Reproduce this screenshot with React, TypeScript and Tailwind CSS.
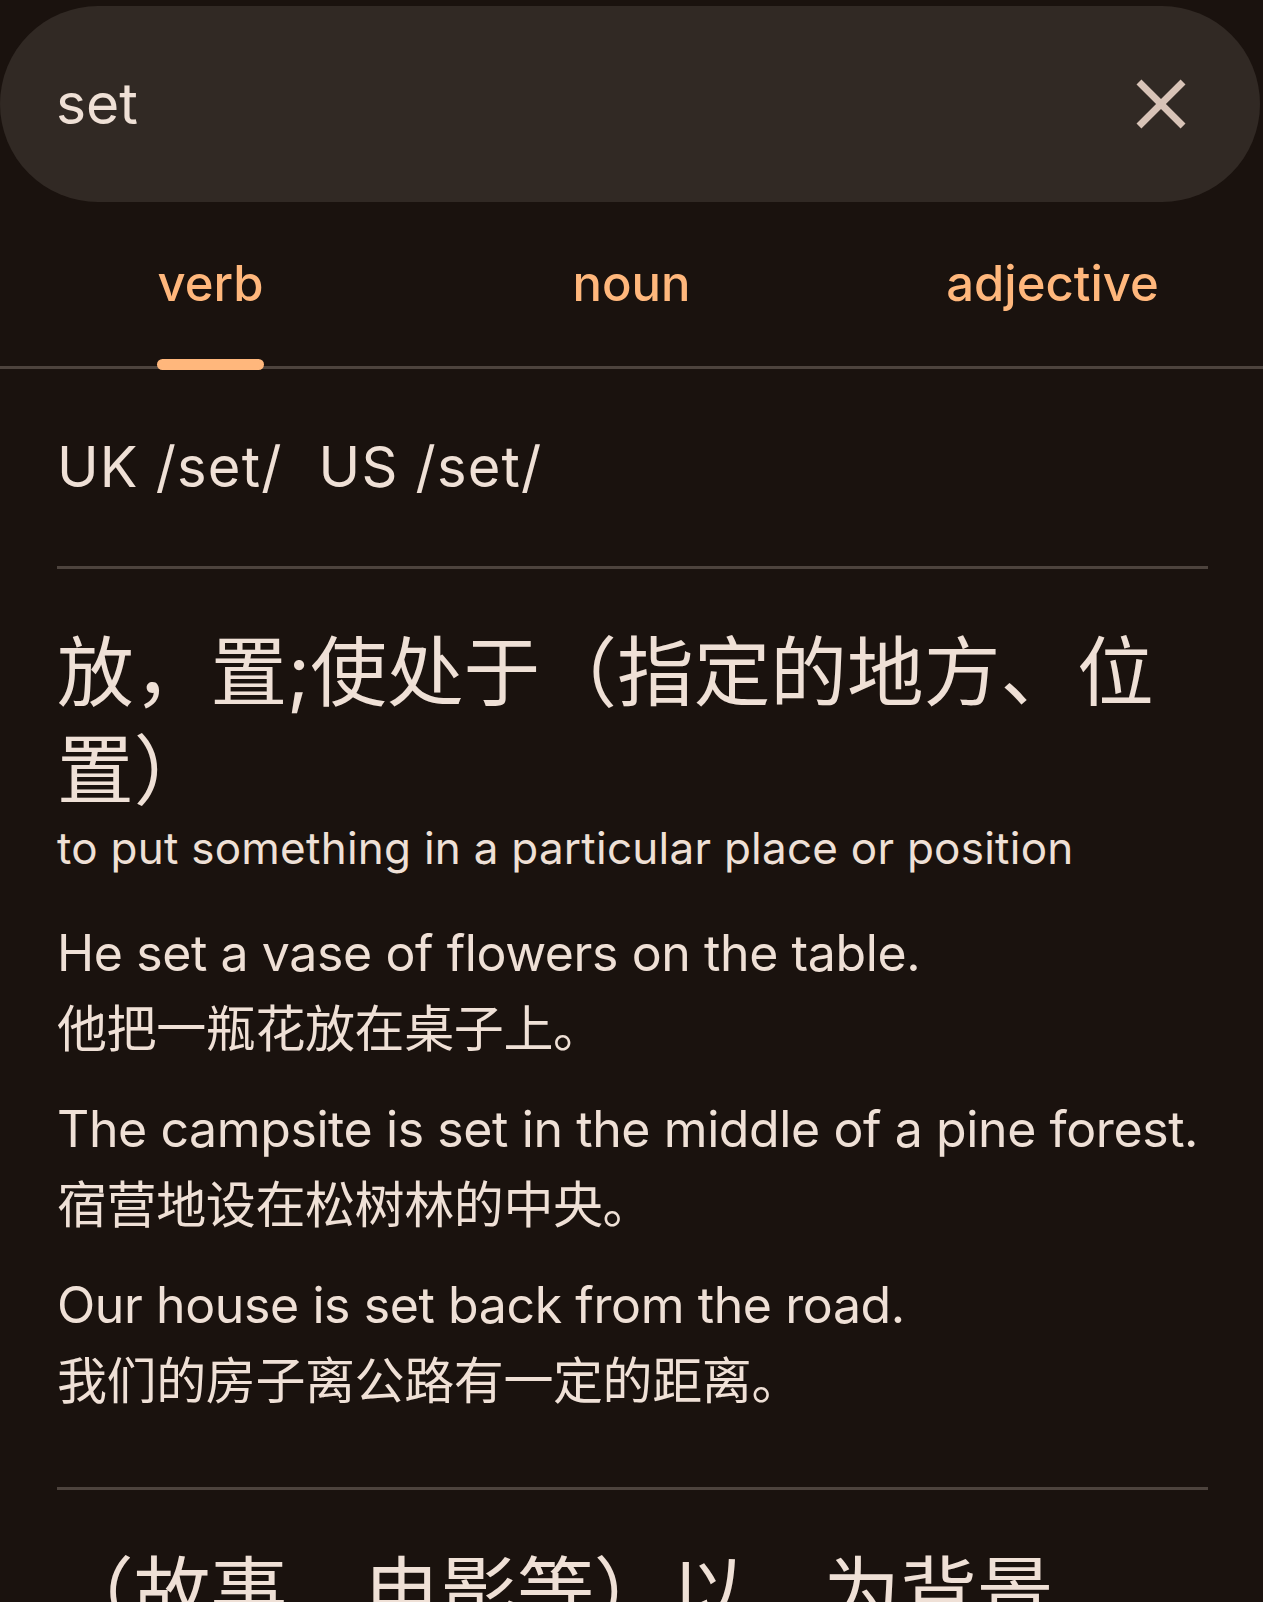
const examples = [
  { en: "He set a vase of flowers on the table.", zh: "他把一瓶花放在桌子上。" },
  { en: "The campsite is set in the middle of a pine forest.", zh: "宿营地设在松树林的中央。" },
  { en: "Our house is set back from the road.", zh: "我们的房子离公路有一定的距离。" },
]

const tabs = ["verb", "noun", "adjective"]

function CloseIcon() {
  return (
    <svg viewBox="0 0 24 24" className="w-[84px] h-[84px] shrink-0" fill="#d8c3b7">
      <path d="M19 6.41 17.59 5 12 10.59 6.41 5 5 6.41 10.59 12 5 17.59 6.41 19 12 13.41 17.59 19 19 17.59 13.41 12z" />
    </svg>
  )
}

export default function App() {
  return (
    <div className="h-screen overflow-hidden bg-[#1a120e] text-[#efe0d6] font-['Inter','Noto_Sans_CJK_SC',sans-serif]">
      {/* search field */}
      <div className="pt-[6px] pr-[3px]">
        <div className="h-[196px] rounded-full bg-[#312924] flex items-center pl-[56px] pr-[57px]">
          <span className="flex-1 text-[57px] leading-normal">set</span>
          <CloseIcon />
        </div>
      </div>

      {/* part of speech tabs */}
      <div className="grid grid-cols-3 border-b-[3px] border-[#4d433d]">
        {tabs.map((t, i) => (
          <div key={t} className="h-[164px] flex justify-center">
            <span className="relative flex items-center text-[49px] font-medium text-[#ffb77c]">
              {t}
              {i === 0 && (
                <span className="absolute left-0 right-0 bottom-[-4px] h-[11px] rounded-full bg-[#ffb77c]" />
              )}
            </span>
          </div>
        ))}
      </div>

      <div className="pl-[57px] pr-[55px]">
        <div className="flex gap-[36px] pt-[65px] pb-[65px] text-[56px] leading-[67px] tracking-[1.2px]">
          <span>UK /set/</span>
          <span>US /set/</span>
        </div>
        <div className="h-[3px] bg-[#4d433d]" />

        <h2 className="pt-[54px] text-[76.7px] leading-[98px]">放，置;使处于（指定的地方、位置）</h2>
        <p className="mt-[3px] text-[44px] leading-[53px] tracking-[0.25px]">
          to put something in a particular place or position
        </p>

        <div className="mt-[40px] flex flex-col gap-[24px]">
          {examples.map((ex) => (
            <div key={ex.en} className="text-[50px] leading-[76px] tracking-[-0.4px]">
              <p>{ex.en}</p>
              <p>{ex.zh}</p>
            </div>
          ))}
        </div>

        <div className="mt-[68px] h-[3px] bg-[#4d433d]" />

        <h2 className="pt-[53px] text-[76.7px] leading-[98px]">
          （故事、电影等）以<span className="tracking-[10px]">…</span>为背景
        </h2>
        <p className="mt-[3px] text-[44px] leading-[53px] tracking-[0.25px]">
          (of a story, film, etc.) to happen in a particular time or place
        </p>
      </div>
    </div>
  )
}
